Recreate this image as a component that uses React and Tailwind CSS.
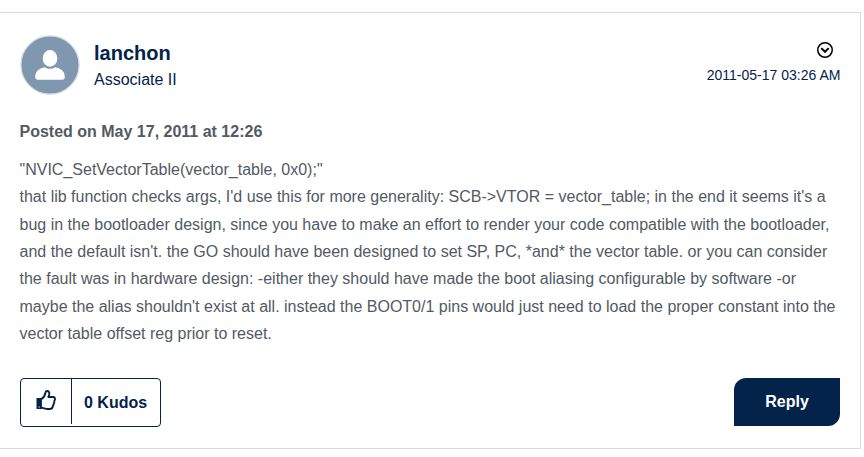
import React from "react";

function Avatar() {
  return (
    <svg className="block h-[60px] w-[60px]" viewBox="0 0 60 60">
      <circle cx="30" cy="30" r="29.1" fill="#8098af" stroke="#d5dde4" strokeWidth="1.2" />
      <ellipse cx="30" cy="23.4" rx="7.3" ry="8.3" fill="#fff" />
      <path
        d="M25 32.2C27.8 34.2 32.2 34.2 35 32.2C40.5 33 44.8 36.5 44.8 41.5C44.8 43.8 44 44.8 42 44.8H18C16 44.8 15.2 43.8 15.2 41.5C15.2 36.5 19.5 33 25 32.2Z"
        fill="#fff"
      />
    </svg>
  );
}

function MenuToggle() {
  return (
    <svg className="block h-4 w-4" viewBox="0 0 16 16" fill="none" stroke="#000" strokeWidth="2">
      <circle cx="8" cy="8" r="7.25" strokeWidth="1.5" />
      <path d="M4.3 6.1L8 9.8L11.7 6.1" />
    </svg>
  );
}

function ThumbsUp() {
  return (
    <svg className="block h-5 w-5" viewBox="0 0 20 20" fill="none" stroke="#03234b" strokeLinejoin="round">
      <path
        d="M5.2 9.2C7.2 8.2 8.8 5.8 9.3 3.2C9.6 1.5 10.2 1 11.2 1C12.8 1 13.6 2.4 13.3 4.2C13.1 5.4 12.7 6.3 12.3 7H17C18.3 7 19 7.9 19 9C19 9.8 18.7 10.4 18.3 10.8C18.6 11.9 18.3 12.9 17.7 13.5C17.8 14.6 17.4 15.4 16.8 16C16.8 18 15.6 19 13.6 19H11.5C9 19 7.8 17.8 5.2 17.6"
        strokeWidth="1.9"
      />
      <path fillRule="evenodd" d="M0.5 8H5.9V19H0.5ZM2.5 16.4H3.7V17.6H2.5Z" fill="#03234b" stroke="none" />
    </svg>
  );
}

function Header() {
  return (
    <header className="flex h-[60px] items-start justify-between">
      <div className="flex items-start gap-[14px]">
        <Avatar />
        <div className="pt-1 text-[#03234b]">
          <div className="text-[20px] leading-7 font-bold">lanchon</div>
          <div className="mt-px text-base leading-6">Associate II</div>
        </div>
      </div>
      <div className="flex flex-col items-end pt-[7px]">
        <div className="pr-[7px]">
          <MenuToggle />
        </div>
        <time className="mt-[7px] -mr-[0.4px] text-sm leading-5 text-[#03234b]">2011-05-17 03:26 AM</time>
      </div>
    </header>
  );
}

function Footer() {
  return (
    <footer className="mt-[30.6px] flex items-start justify-between">
      <div className="flex h-[49px] w-[141px] items-start rounded-[4px] border border-[#03234b] text-[#03234b]">
        <div className="flex h-[45px] w-[51px] items-start border-r border-[#03234b] pt-[11px] pl-[15px]">
          <ThumbsUp />
        </div>
        <div className="pt-3 pl-3 text-base leading-6 font-bold">0 Kudos</div>
      </div>
      <button className="h-12 w-[106px] rounded-tl-xl rounded-br-xl bg-[#03234b] text-base font-bold text-white">
        Reply
      </button>
    </footer>
  );
}

export default function App() {
  return (
    <main className="h-[457px] bg-white pt-3 font-['Liberation_Sans',Arial,sans-serif]">
      <article className="h-[437px] w-[861px] border-y border-r border-[#d9dbe0] px-5 pt-[22px]">
        <Header />
        <div className="mt-[23px] -ml-[0.5px] text-base leading-[27.43px] text-[#525a63]">
          <p className="font-bold">Posted on May 17, 2011 at 12:26</p>
          <p className="mt-[10.3px]">
            &quot;NVIC_SetVectorTable(vector_table, 0x0);&quot;
            <br />
            that lib function checks args, I&apos;d use this for more generality: SCB-&gt;VTOR = vector_table; in the
            end it seems it&apos;s a bug in the bootloader design, since you have to make an effort to render your code
            compatible with the bootloader, and the default isn&apos;t. the GO should have been designed to set SP, PC,
            *and* the vector table. or you can consider the fault was in hardware design: -either they should have made
            the boot aliasing configurable by software -or maybe the alias shouldn&apos;t exist at all. instead the
            BOOT0/1 pins would just need to load the proper constant into the vector table offset reg prior to reset.
          </p>
        </div>
        <Footer />
      </article>
    </main>
  );
}
